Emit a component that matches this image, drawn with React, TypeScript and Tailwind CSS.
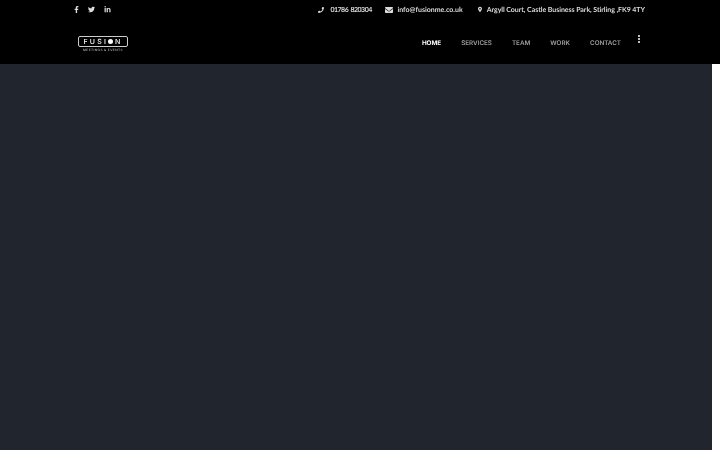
import React from 'react';
import { FaFacebookF, FaTwitter, FaLinkedinIn, FaEnvelope, FaPhoneAlt, FaMapMarkerAlt } from 'react-icons/fa';

const NAV = [
  { label: 'Home', active: true },
  { label: 'Services' },
  { label: 'Team' },
  { label: 'Work' },
  { label: 'Contact' },
];

const Logo = () => (
  <div className="flex w-[50px] flex-col items-center">
    <div className="flex h-[11px] w-[50px] items-center justify-center rounded-[2px] border border-[#cccccc] font-['Inter',sans-serif] text-[7px] leading-none font-medium tracking-[2.2px] text-white">
      FUSI<span className="mr-[2px] inline-block h-[5px] w-[5px] rounded-full bg-white" />N
    </div>
    <div className="mt-[1px] font-['Inter',sans-serif] text-[3.2px] leading-[4px] font-semibold tracking-[0.4px] text-[#aaaaaa] uppercase">
      Meetings &amp; Events
    </div>
  </div>
);

const App: React.FC = () => {
  return (
    <div className="flex h-[450px] w-[720px] flex-col overflow-hidden bg-white">
      <header className="flex h-[64px] shrink-0 flex-col bg-black pr-[75px] pl-[74px] [text-rendering:geometricPrecision]">
        <div className="flex h-[19px] items-center justify-between font-['Lato',sans-serif] text-[7px] font-bold text-[#dcdcdc] [will-change:transform]">
          <div className="flex items-center gap-[9px] text-[#dddddd]">
            <FaFacebookF className="h-[7px] w-[5px]" />
            <FaTwitter className="h-[7px] w-[7px]" />
            <FaLinkedinIn className="h-[7px] w-[7px]" />
          </div>
          <div className="flex items-center">
            <FaPhoneAlt className="mr-[6px] h-[6px] w-[6px] -scale-x-100" />
            <span className="w-[40px] pt-[1px] tracking-[-0.5px] whitespace-nowrap [word-spacing:1px]">01786 820304</span>
            <FaEnvelope className="mr-[4px] ml-[15px] h-[8px] w-[8px]" />
            <span className="pt-[1px]">info@fusionme.co.uk</span>
            <FaMapMarkerAlt className="mr-[5px] ml-[15px] h-[7px] w-[4px]" />
            <span className="pt-[1px] tracking-[-0.05px]">Argyll Court, Castle Business Park, Stirling ,FK9 4TY</span>
          </div>
        </div>
        <div className="flex flex-1 items-start justify-between pl-[4px] [will-change:transform]">
          <div className="pt-[17px]">
            <Logo />
          </div>
          <div className="flex items-start">
            <nav className="flex gap-[20px] pt-[19.5px] font-['Inter',sans-serif] text-[6.3px] leading-[9px] font-semibold uppercase">
              {NAV.map(n => (
                <span key={n.label} className={n.active ? 'font-bold text-white' : 'text-[#a0a0a0]'}>
                  {n.label}
                </span>
              ))}
            </nav>
            <div className="mt-[16px] mr-[5px] ml-[17px] flex flex-col gap-[1px]">
              <span className="h-[2px] w-[2px] rounded-full bg-white" />
              <span className="h-[2px] w-[2px] rounded-full bg-white" />
              <span className="h-[2px] w-[2px] rounded-full bg-white" />
            </div>
          </div>
        </div>
      </header>
      <main className="flex flex-1">
        <div className="w-[712px] bg-[#21262e]" />
        <div className="flex-1 bg-white" />
      </main>
    </div>
  );
};

export default App;
